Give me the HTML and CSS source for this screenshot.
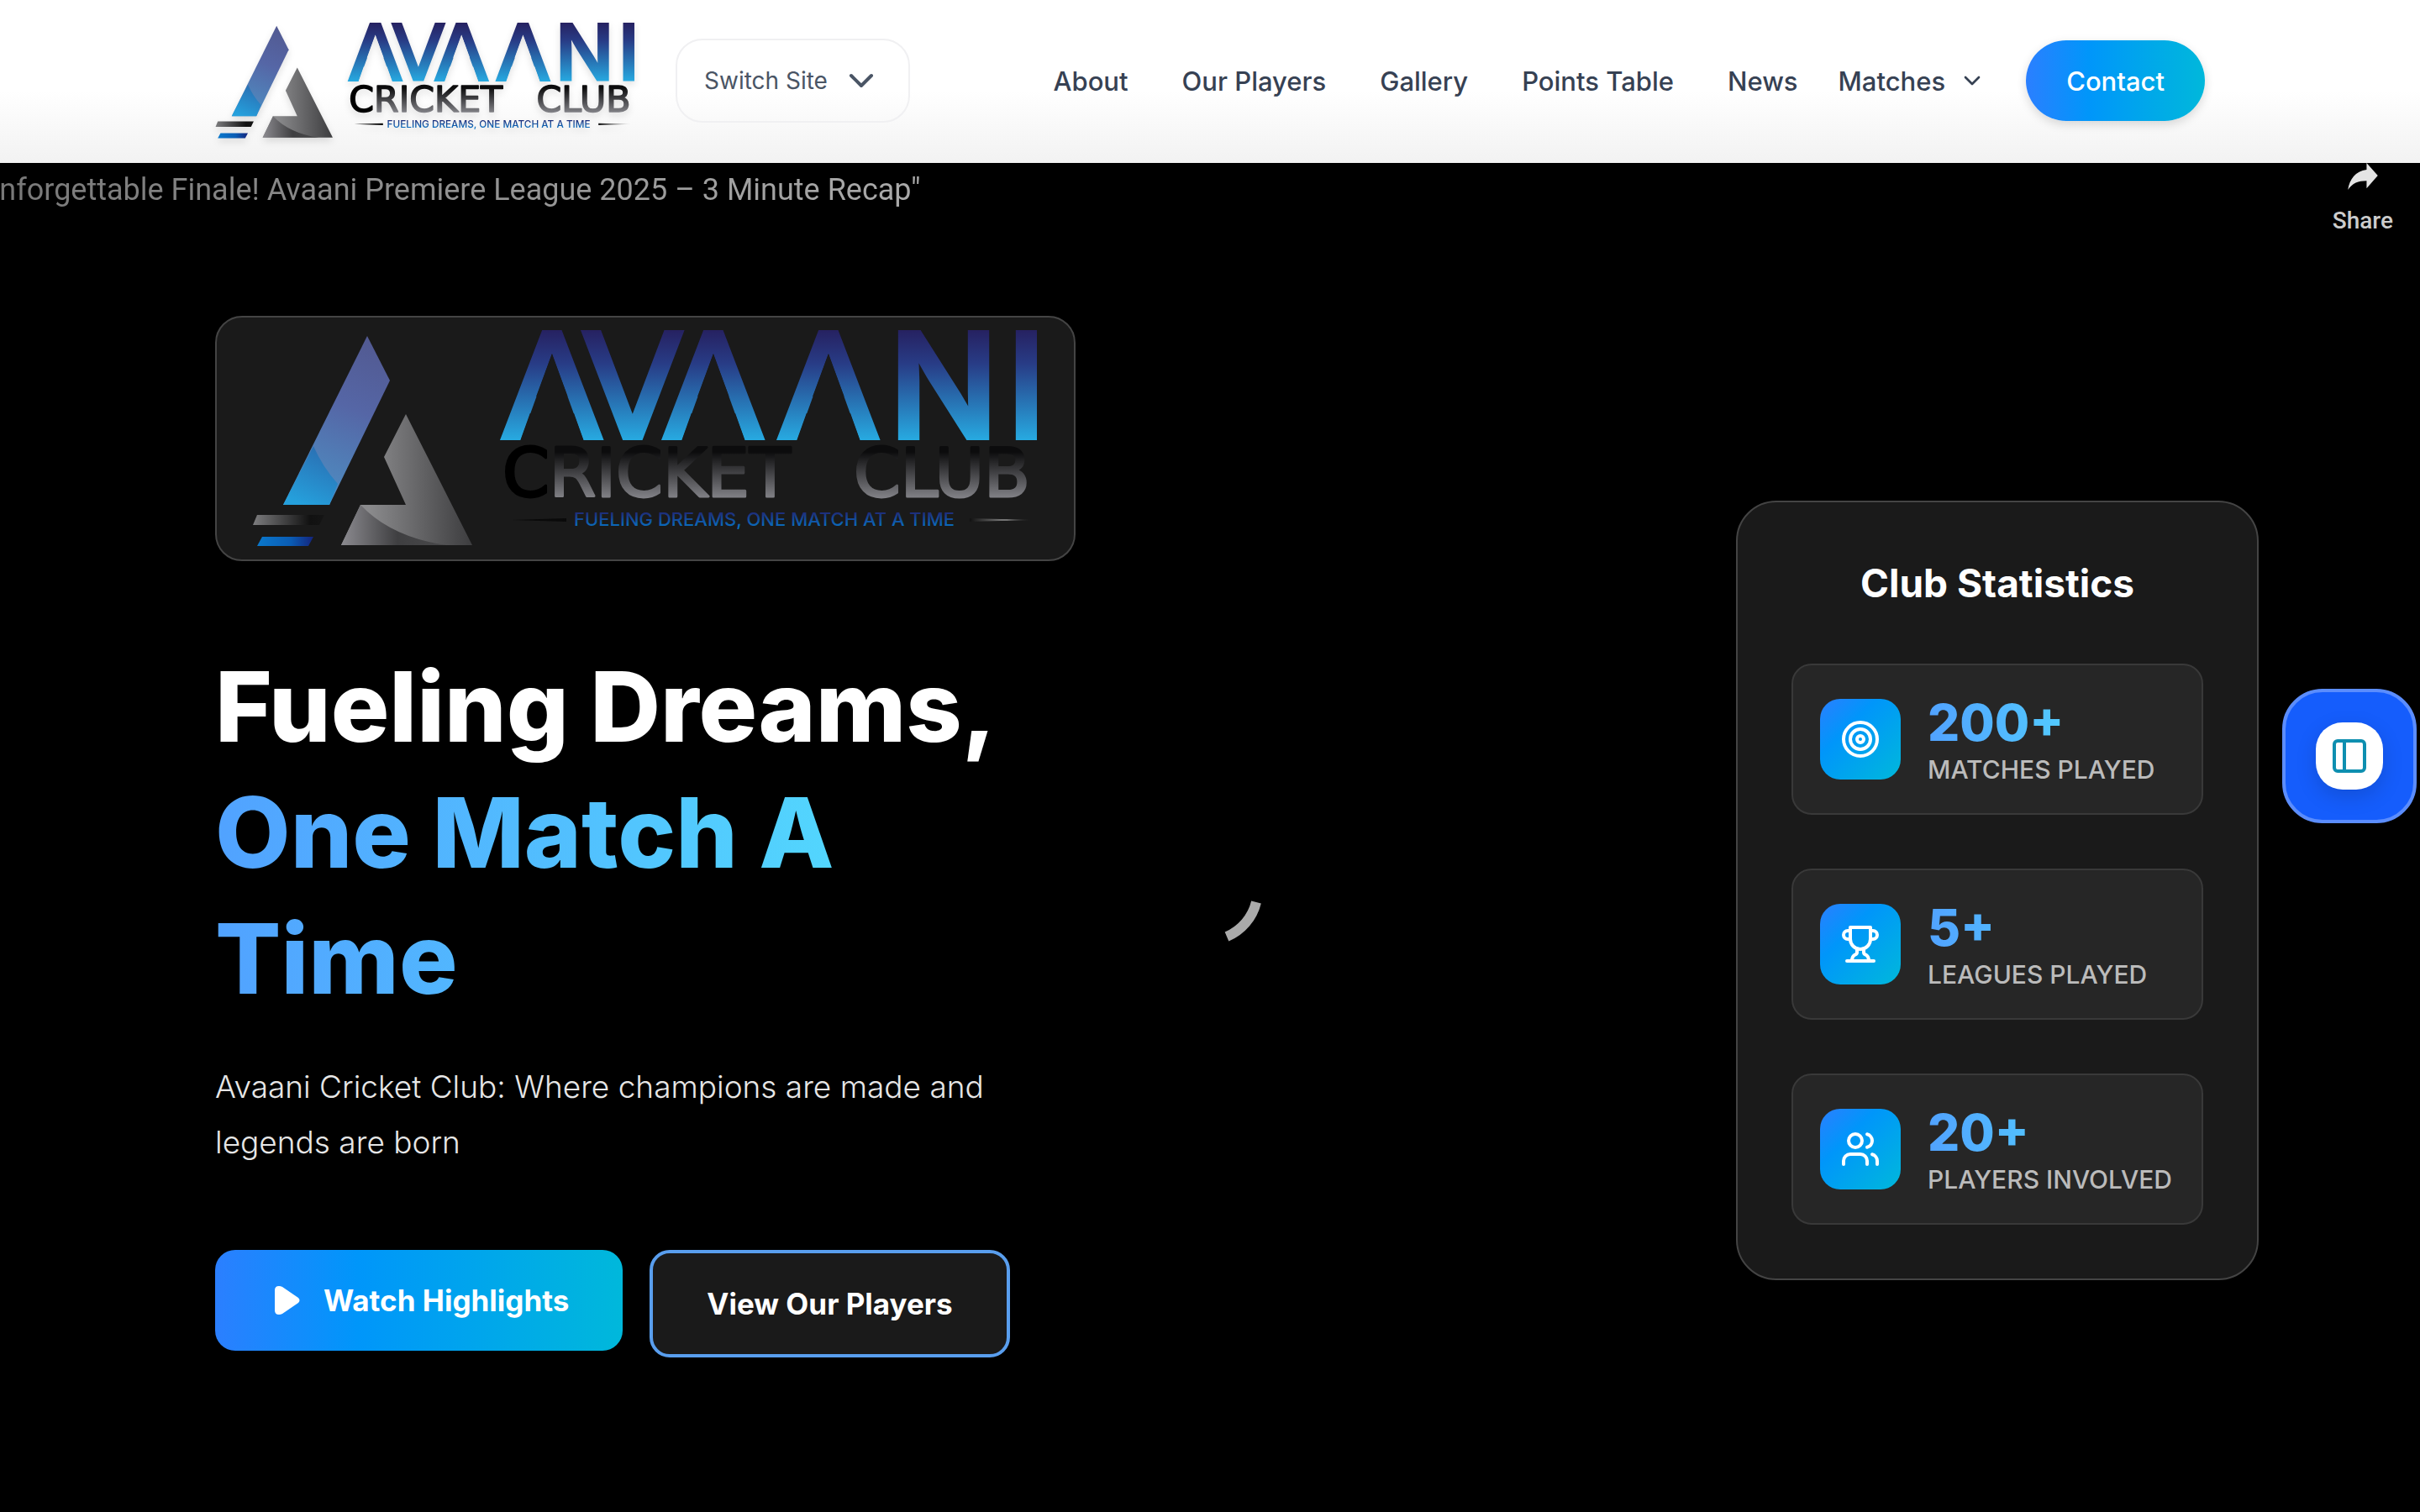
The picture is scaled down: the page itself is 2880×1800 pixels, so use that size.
FILE: index.html
```html
<!DOCTYPE html>
<html lang="en">
<head>
    <meta charset="UTF-8">
    <meta name="viewport" content="width=device-width, initial-scale=1.0">
    <title>Avaani Cricket Club</title>
    <link rel="stylesheet" href="styles.css">
</head>
<body>
    <!-- Shared logo artwork -->
    <svg class="defs" width="0" height="0" aria-hidden="true">
        <defs>
            <linearGradient id="word" gradientUnits="userSpaceOnUse" x1="0" y1="394" x2="0" y2="524">
                <stop offset="0" stop-color="#262262"/>
                <stop offset="0.3" stop-color="#283c86"/>
                <stop offset="1" stop-color="#27aae1"/>
            </linearGradient>
            <linearGradient id="club" gradientUnits="userSpaceOnUse" x1="0" y1="538" x2="0" y2="592">
                <stop offset="0" stop-color="#0c0c0d"/>
                <stop offset="1" stop-color="#808085"/>
            </linearGradient>
            <linearGradient id="tag" gradientUnits="userSpaceOnUse" x1="0" y1="608" x2="0" y2="628">
                <stop offset="0" stop-color="#21246f"/>
                <stop offset="1" stop-color="#0872c4"/>
            </linearGradient>
            <linearGradient id="blade" gradientUnits="userSpaceOnUse" x1="450" y1="410" x2="370" y2="600">
                <stop offset="0" stop-color="#525a92"/>
                <stop offset="0.4" stop-color="#5566a6"/>
                <stop offset="0.75" stop-color="#5080b8"/>
                <stop offset="1" stop-color="#4f8fc6"/>
            </linearGradient>
            <linearGradient id="bladeFoot" gradientUnits="userSpaceOnUse" x1="390" y1="535" x2="360" y2="601">
                <stop offset="0" stop-color="#2a6eb2"/>
                <stop offset="1" stop-color="#25a0dc"/>
            </linearGradient>
            <linearGradient id="steel" gradientUnits="userSpaceOnUse" x1="440" y1="0" x2="560" y2="0">
                <stop offset="0" stop-color="#8a8a8c"/>
                <stop offset="1" stop-color="#3e3e40"/>
            </linearGradient>
            <linearGradient id="steelFoot" gradientUnits="userSpaceOnUse" x1="406" y1="0" x2="540" y2="0">
                <stop offset="0" stop-color="#8c8b90"/>
                <stop offset="0.5" stop-color="#3f3f41"/>
                <stop offset="1" stop-color="#4a4a4c"/>
            </linearGradient>
            <linearGradient id="barGray">
                <stop offset="0" stop-color="#7d7d7f"/>
                <stop offset="0.8" stop-color="#111"/>
                <stop offset="1" stop-color="#151515"/>
            </linearGradient>
            <linearGradient id="barBlue">
                <stop offset="0" stop-color="#0a78cc"/>
                <stop offset="0.6" stop-color="#0a5cb4"/>
                <stop offset="1" stop-color="#14247c"/>
            </linearGradient>
            <linearGradient id="ruleRight">
                <stop offset="0" stop-color="#111"/>
                <stop offset="0.6" stop-color="#888"/>
                <stop offset="1" stop-color="#888" stop-opacity="0"/>
            </linearGradient>
            <!-- Opens up the A counters so the letters have no crossbar -->
            <mask id="openCounters" maskUnits="userSpaceOnUse" x="580" y="380" width="670" height="160">
                <rect x="580" y="380" width="670" height="160" fill="#fff"/>
                <polygon fill="#000" points="657,421 695,526 619,526"/>
                <polygon fill="#000" points="849,421 887,526 811,526"/>
                <polygon fill="#000" points="986,421 1024,526 948,526"/>
            </mask>
        </defs>
        <symbol id="logo" viewBox="300 393 936 258">
            <polygon fill="url(#blade)" points="437,400 464,453 392,601 337,601"/>
            <path fill="url(#bladeFoot)" d="M373 531 Q384 556 402 576 L392 601 L337 601 Z"/>
            <polygon fill="url(#steel)" points="483,493 562,649 406,649 429,601 483,601 457,544"/>
            <path fill="url(#steelFoot)" d="M429 601 Q466 640 532 649 L406 649 Z"/>
            <polygon fill="url(#barGray)" points="306,613 386,613 380,625 301,625"/>
            <polygon fill="url(#barBlue)" points="312,639 373,639 367,650 306,650"/>
            <g mask="url(#openCounters)">
                <text class="logo-word" y="521" x="598 694 790 927" fill="url(#word)" stroke="url(#word)">AVAA<tspan class="logo-word-end" x="1058 1198">NI</tspan></text>
            </g>
            <text class="logo-club" x="598" y="591" fill="url(#club)" stroke="url(#club)"><tspan fill="#000" stroke="#000">C</tspan>RICKET</text>
            <text class="logo-club" x="1016" y="591" fill="url(#club)" stroke="url(#club)">CLUB</text>
            <polygon fill="#0a0a0a" points="610,619 674,617 674,621"/>
            <text class="logo-tag" x="683" y="626" fill="url(#tag)">FUELING DREAMS, ONE MATCH AT A TIME</text>
            <polygon fill="url(#ruleRight)" points="1154,617 1228,619 1154,621"/>
        </symbol>
    </svg>

    <header class="site-header">
        <div class="header-inner">
            <a class="brand" href="#"><svg class="brand-logo" role="img" aria-label="Avaani Cricket Club"><use href="#logo"/></svg></a>
            <button class="switch-site" type="button">
                Switch Site
                <svg class="chevron-lg" viewBox="0 0 24 24"><path d="m6 9 6 6 6-6"/></svg>
            </button>
            <nav class="main-nav">
                <a href="#about">About</a>
                <a href="#players">Our Players</a>
                <a href="#gallery">Gallery</a>
                <a href="#points">Points Table</a>
                <a href="#news">News</a>
                <button class="nav-menu" type="button">
                    Matches
                    <svg class="chevron-sm" viewBox="0 0 24 24"><path d="m6 9 6 6 6-6"/></svg>
                </button>
                <a class="contact" href="#contact">Contact</a>
            </nav>
        </div>
    </header>

    <main class="hero">
        <!-- Background video chrome -->
        <div class="video-bar">
            <p class="video-title">Unforgettable Finale! Avaani Premiere League 2025 – 3 Minute Recap"</p>
            <button class="share" type="button">
                <svg class="share-icon" viewBox="0 0 40 36"><path d="M25 0 L40 17 L25 34 V24 C14 24 6 27 0 36 C2 22 10 11 25 9 Z"/></svg>
                Share
            </button>
        </div>
        <svg class="spinner" viewBox="0 0 48 54"><path d="M39 3 A60 60 0 0 1 4 44"/></svg>

        <div class="hero-inner">
            <section class="intro">
                <div class="logo-card"><svg class="hero-logo" role="img" aria-label="Avaani Cricket Club"><use href="#logo"/></svg></div>
                <h1>Fueling Dreams, <span>One Match A Time</span></h1>
                <p class="lead">Avaani Cricket Club: Where champions are made and legends are born</p>
                <div class="actions">
                    <button class="btn btn-primary" type="button">
                        <svg class="play" viewBox="0 0 30 34"><path d="M5 0 Q0 0 0 5 V29 Q0 34 5 34 Q7 34 9 33 L28 20 Q31 17 28 14 L9 1 Q7 0 5 0 Z"/></svg>
                        Watch Highlights
                    </button>
                    <a class="btn btn-outline" href="#players">View Our Players</a>
                </div>
            </section>

            <aside class="stats">
                <h2>Club Statistics</h2>
                <div class="stat">
                    <div class="stat-icon">
                        <svg viewBox="0 0 24 24"><circle cx="12" cy="12" r="10"/><circle cx="12" cy="12" r="6"/><circle cx="12" cy="12" r="2"/></svg>
                    </div>
                    <div class="stat-text">
                        <strong>200+</strong>
                        <span>MATCHES PLAYED</span>
                    </div>
                </div>
                <div class="stat">
                    <div class="stat-icon">
                        <svg viewBox="0 0 24 24"><path d="M6 9H4.5a2.5 2.5 0 0 1 0-5H6"/><path d="M18 9h1.500a2.500 2.500 0 0 0 0-5H18"/><path d="M4 22h16"/><path d="M10 14.660V17c0 .55-.47.98-.97 1.210C7.850 18.750 7 20.240 7 22"/><path d="M14 14.660V17c0 .55.47.98.97 1.210C16.150 18.750 17 20.240 17 22"/><path d="M18 2H6v7a6 6 0 0 0 12 0V2Z"/></svg>
                    </div>
                    <div class="stat-text">
                        <strong>5+</strong>
                        <span>LEAGUES PLAYED</span>
                    </div>
                </div>
                <div class="stat">
                    <div class="stat-icon">
                        <svg viewBox="0 0 24 24"><path d="M16 21v-2a4 4 0 0 0-4-4H6a4 4 0 0 0-4 4v2"/><circle cx="9" cy="7" r="4"/><path d="M22 21v-2a4 4 0 0 0-3-3.870"/><path d="M16 3.130a4 4 0 0 1 0 7.750"/></svg>
                    </div>
                    <div class="stat-text">
                        <strong>20+</strong>
                        <span>PLAYERS INVOLVED</span>
                    </div>
                </div>
            </aside>
        </div>
    </main>

    <button class="panel-toggle" type="button" aria-label="Open panel">
        <span class="panel-face">
            <svg viewBox="0 0 24 24"><rect x="3" y="3" width="18" height="18" rx="2"/><path d="M9 3v18"/></svg>
        </span>
    </button>
</body>
</html>
```
FILE: styles.css
```css
* {
    box-sizing: border-box;
    margin: 0;
    padding: 0;
}
body {
    font-family: Inter, "Liberation Sans", sans-serif;
    background-color: #000;
    color: #fff;
    min-height: 100vh;
    display: flex;
    flex-direction: column;
}
button {
    font: inherit;
    color: inherit;
    background: none;
    border: none;
    cursor: pointer;
}
a {
    color: inherit;
    text-decoration: none;
}
svg {
    fill: none;
    stroke-linecap: round;
    stroke-linejoin: round;
    flex: none;
}
.defs {
    position: absolute;
}

/* Logo text */
.logo-word {
    font: 172px "DejaVu Sans", sans-serif;
    stroke-width: 6px;
    stroke-linejoin: miter;
}
.logo-word-end {
    font-family: Inter, sans-serif;
    font-weight: 500;
}
.logo-club {
    font: 80px "DejaVu Sans", sans-serif;
    stroke-width: 3px;
}
.logo-tag {
    font: 500 22px Inter, sans-serif;
}

/* Header */
.site-header {
    background: linear-gradient(to bottom, #fff 56%, #f2f2f2);
    color: #364153;
}
.header-inner {
    display: flex;
    align-items: center;
    height: 194px;
    padding: 0 256px 2px;
}
.brand {
    display: flex;
}
.brand-logo {
    width: 500px;
    height: 138px;
    filter: drop-shadow(0 4px 4px rgba(0, 0, 0, 0.12));
}
.switch-site {
    display: flex;
    align-items: center;
    gap: 16px;
    height: 100px;
    margin-left: 48px;
    padding: 0 32px;
    border: 2px solid #f0f0f2;
    border-radius: 32px;
    font-size: 28px;
    color: #4a5565;
}
.chevron-lg {
    width: 48px;
    height: 48px;
    stroke: #4a5565;
    stroke-width: 2;
}
.main-nav {
    display: flex;
    align-items: center;
    gap: 64px;
    margin-left: auto;
    font-size: 31px;
    font-weight: 500;
}
.nav-menu {
    display: flex;
    align-items: center;
    gap: 16px;
    margin-left: -16px;
}
.chevron-sm {
    width: 32px;
    height: 32px;
    stroke: #364153;
    stroke-width: 2;
}
.contact {
    display: flex;
    align-items: center;
    height: 96px;
    margin-left: -16px;
    padding: 0 48px;
    border-radius: 48px;
    background: linear-gradient(to right, #2b7fff, #0096fa 35%, #00b8db);
    box-shadow: 0 4px 12px rgba(0, 0, 0, 0.15);
    color: #fff;
}

/* Hero */
.hero {
    position: relative;
    flex: 1;
    background-color: #000;
}
.video-bar {
    position: absolute;
    top: 0;
    left: 0;
    right: 0;
    display: flex;
    justify-content: space-between;
    padding: 0 32px 0 0;
    font-family: Roboto, sans-serif;
}
.video-title {
    margin-left: -24px;
    padding-top: 10px;
    font-size: 36px;
    line-height: 44px;
    background: linear-gradient(to right, #777, #aaa);
    -webkit-background-clip: text;
    background-clip: text;
    color: transparent;
}
.share {
    display: flex;
    flex-direction: column;
    align-items: center;
    gap: 20px;
    font-size: 28px;
    font-weight: 500;
    color: #ccc;
}
.share-icon {
    width: 40px;
    height: 32px;
    fill: #e4e4e4;
}
.spinner {
    position: absolute;
    left: 50%;
    top: 50%;
    width: 48px;
    height: 54px;
    margin: 74px 0 0 16px;
    stroke: #aaa;
    stroke-width: 12;
    stroke-linecap: butt;
}
.hero-inner {
    position: relative;
    display: flex;
    justify-content: space-between;
    align-items: center;
    padding: 182px 192px 0 256px;
}
.intro {
    width: 1024px;
    padding-bottom: 128px;
}
.logo-card {
    padding: 15px 42px;
    border: 2px solid #444;
    border-radius: 32px;
    background-color: #1a1a1a;
}
.hero-logo {
    display: block;
    width: 936px;
    height: 258px;
}
h1 {
    margin-top: 98px;
    font-size: 116px;
    line-height: 150px;
    font-weight: 800;
}
h1 span {
    display: block;
    background: linear-gradient(to right, #51a2ff, #53eafd);
    -webkit-background-clip: text;
    background-clip: text;
    color: transparent;
}
.lead {
    margin-top: 45px;
    font-size: 37px;
    line-height: 66px;
    font-weight: 300;
    color: #e6e6e6;
}
.actions {
    display: flex;
    align-items: flex-start;
    gap: 32px;
    margin-top: 95px;
}
.btn {
    display: flex;
    align-items: center;
    height: 120px;
    border-radius: 24px;
    font-size: 35px;
    font-weight: 700;
}
.btn-primary {
    gap: 28px;
    padding: 0 64px 0 71px;
    background: linear-gradient(to right, #2b7fff, #0096fa 35%, #00b8db);
}
.btn-outline {
    height: 128px;
    padding: 0 64px;
    border: 4px solid #599eee;
    background-color: #1a1a1a;
}
.play {
    width: 30px;
    height: 34px;
    fill: #fff;
}

/* Statistics */
.stats {
    display: flex;
    flex-direction: column;
    gap: 64px;
    width: 622px;
    padding: 64px;
    border: 2px solid #444;
    border-radius: 48px;
    background-color: #1a1a1a;
}
.stats h2 {
    font-size: 46px;
    line-height: 64px;
    font-weight: 700;
    text-align: center;
}
.stat {
    display: flex;
    align-items: center;
    gap: 32px;
    padding: 32px;
    border: 2px solid #393939;
    border-radius: 24px;
    background-color: #262626;
}
.stat-icon {
    display: flex;
    align-items: center;
    justify-content: center;
    width: 96px;
    height: 96px;
    border-radius: 24px;
    background: linear-gradient(to bottom right, #2b7fff, #0096fa 35%, #00b8db);
}
.stat-icon svg {
    width: 48px;
    height: 48px;
    stroke: #fff;
    stroke-width: 2;
}
.stat-text {
    flex: 1;
}
.stat-text strong {
    display: block;
    font-size: 60px;
    line-height: 72px;
    font-weight: 800;
    background: linear-gradient(to right, #51a2ff, #53eafd);
    -webkit-background-clip: text;
    background-clip: text;
    color: transparent;
}
.stat-text span {
    display: block;
    font-size: 30px;
    line-height: 40px;
    font-weight: 500;
    color: #bbb;
    white-space: nowrap;
}

/* Floating panel button */
.panel-toggle {
    position: fixed;
    right: 4px;
    top: 820px;
    display: flex;
    align-items: center;
    justify-content: center;
    width: 160px;
    height: 160px;
    border: 4px solid #5b8dfd;
    border-radius: 48px;
    background-color: #155dfc;
}
.panel-face {
    display: flex;
    align-items: center;
    justify-content: center;
    width: 80px;
    height: 80px;
    border-radius: 32px;
    background-color: #fff;
    box-shadow: 0 8px 24px rgba(0, 0, 0, 0.15);
}
.panel-face svg {
    width: 48px;
    height: 48px;
    stroke: #0e8fb0;
    stroke-width: 2;
}
```
